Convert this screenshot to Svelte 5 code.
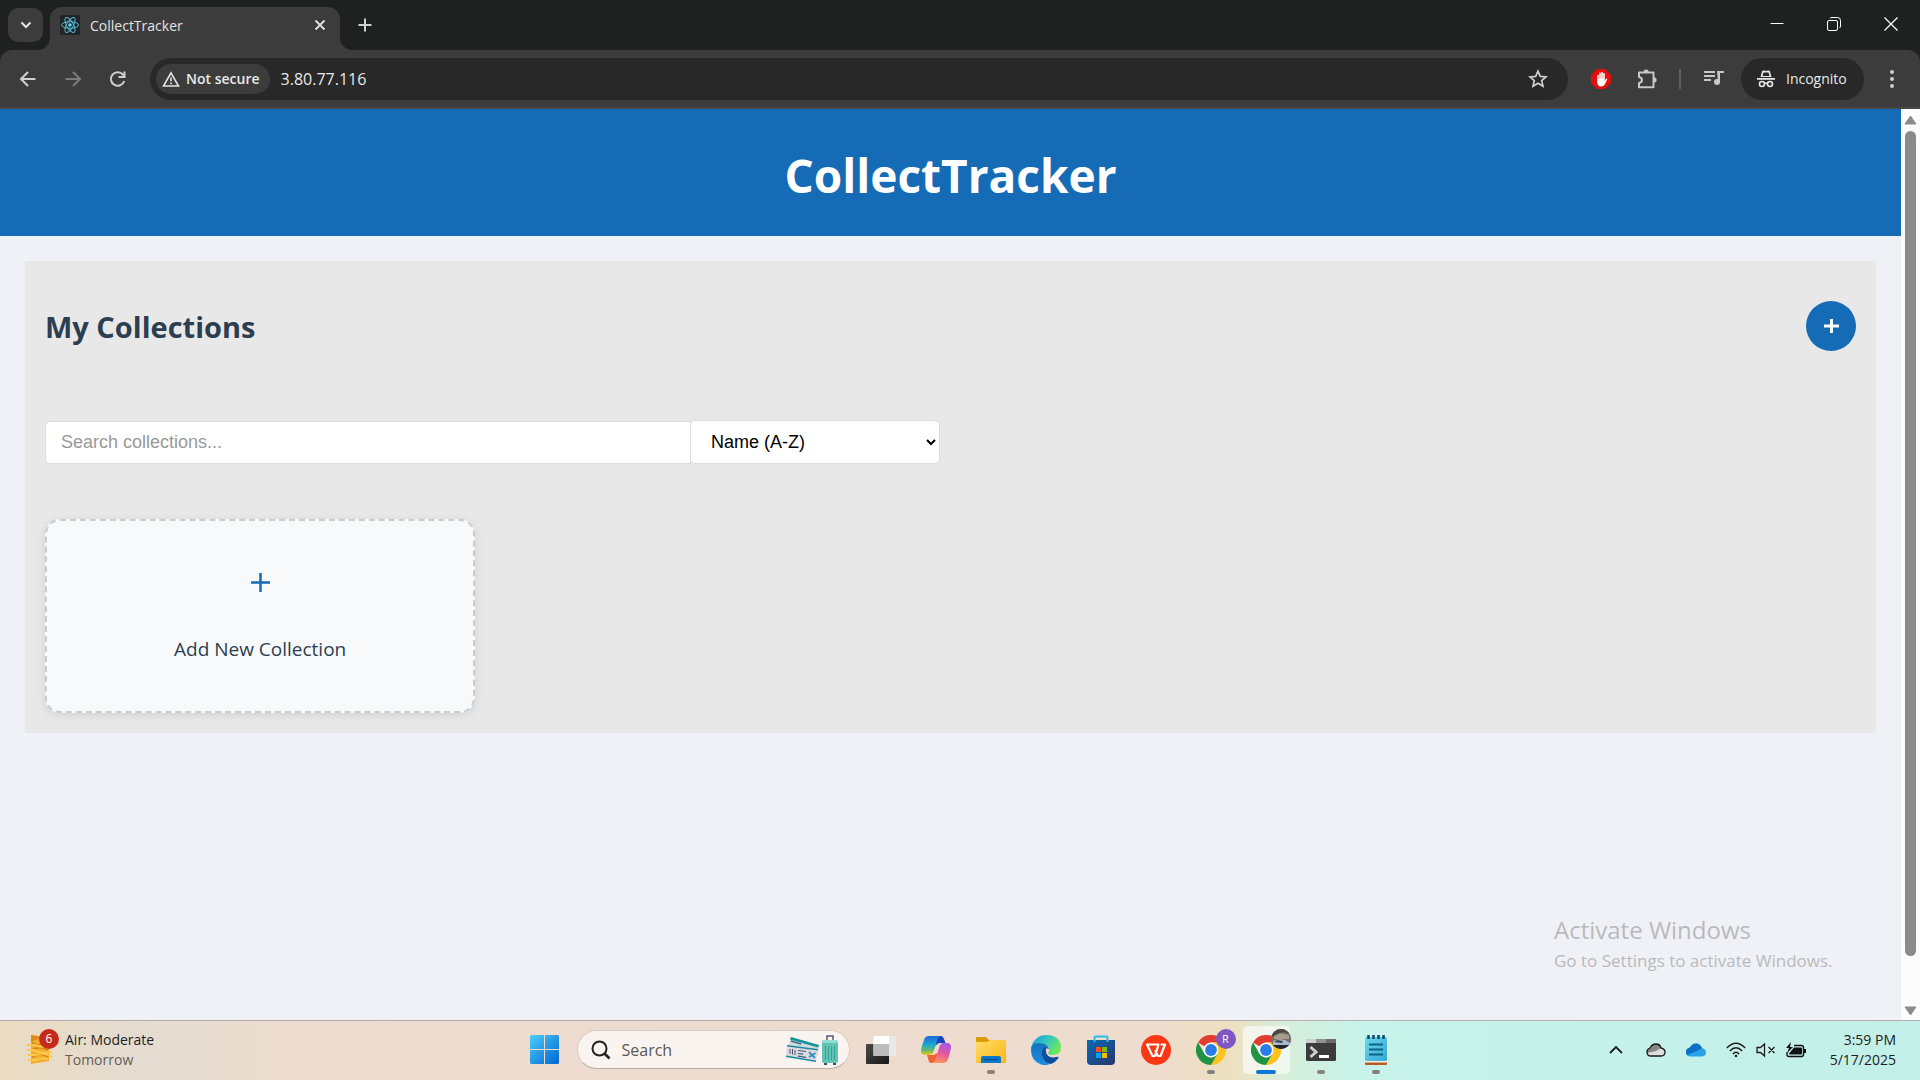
<script>
  let query = $state('');
  let order = $state('name-asc');
  let address = $state('3.80.77.116');
</script>

{#snippet chrome()}
  <svg class="chrome" viewBox="0 0 30 30" aria-hidden="true">
    <path d="M15 15 2 7.500A15 15 0 0 1 28 7.500H15z" fill="#e33b2e" />
    <path d="M28 7.500A15 15 0 0 1 15 30L21.500 18.700 15 7.500z" fill="#fcc31e" />
    <path d="M2 7.500 8.500 18.700 15 22.500 21.500 18.700 15 30A15 15 0 0 1 2 7.500z" fill="#229342" />
    <circle cx="15" cy="15" r="7.500" fill="#fff" />
    <circle cx="15" cy="15" r="5.900" fill="#2a7de9" />
  </svg>
{/snippet}

<div class="screen">
  <div class="tabstrip">
    <button class="tabsearch" aria-label="Search tabs">
      <svg width="12" height="8" viewBox="0 0 12 8"><path d="M1.500 1.500 6 6l4.500-4.500" fill="none" stroke="#e3e3e3" stroke-width="2" /></svg>
    </button>
    <div class="tab">
      <svg class="favicon" width="20" height="20" viewBox="0 0 20 20">
        <rect width="20" height="20" rx="2" fill="#222427" />
        <g fill="none" stroke="#53b9d2" stroke-width="1">
          <ellipse cx="10" cy="10" rx="8.500" ry="3.300" />
          <ellipse cx="10" cy="10" rx="8.500" ry="3.300" transform="rotate(60 10 10)" />
          <ellipse cx="10" cy="10" rx="8.500" ry="3.300" transform="rotate(120 10 10)" />
        </g>
        <circle cx="10" cy="10" r="1.700" fill="#61dafb" />
      </svg>
      <span class="tabtitle">CollectTracker</span>
      <button class="plain" aria-label="Close tab">
        <svg width="20" height="20" viewBox="0 0 20 20"><path d="m5.500 5.500 9 9m0-9-9 9" stroke="#e3e3e3" stroke-width="1.800" /></svg>
      </button>
    </div>
    <button class="plain newtab" aria-label="New tab">
      <svg width="20" height="20" viewBox="0 0 20 20"><path d="M10 3.500v13M3.500 10h13" stroke="#d0d0d0" stroke-width="2" /></svg>
    </button>
    <div class="wincontrols">
      <button class="plain" aria-label="Minimize"><svg width="16" height="16" viewBox="0 0 16 16"><path d="M1.500 7.500h13" stroke="#fff" /></svg></button>
      <button class="plain" aria-label="Restore"><svg width="16" height="16" viewBox="0 0 16 16" fill="none" stroke="#fff"><rect x="1.500" y="4.500" width="10" height="10" rx="1.500" /><path d="M4 2.500c.5-.7 1-1 2-1h5.500a3 3 0 0 1 3 3V10c0 1-.3 1.500-1 2" /></svg></button>
      <button class="plain" aria-label="Close"><svg width="16" height="16" viewBox="0 0 16 16"><path d="m1.500 1.500 13 13m0-13-13 13" stroke="#fff" stroke-width="1.200" /></svg></button>
    </div>
  </div>

  <div class="toolbar">
    <div class="nav">
      <button class="plain" aria-label="Back"><svg width="20" height="20" viewBox="0 0 20 20" fill="none" stroke="#cfcfcf" stroke-width="2"><path d="M17.500 10H4M10 3l-7 7 7 7" /></svg></button>
      <button class="plain" aria-label="Forward"><svg width="20" height="20" viewBox="0 0 20 20" fill="none" stroke="#7c7c7c" stroke-width="2"><path d="M2.500 10H16M10 3l7 7-7 7" /></svg></button>
      <button class="plain" aria-label="Reload"><svg width="20" height="20" viewBox="0 0 20 20" fill="none" stroke="#cfcfcf" stroke-width="2"><path d="M16.200 12A6.800 6.800 0 1 1 15 5.700l1.300 1.500M16.500 2.500v5.500h-6" /></svg></button>
    </div>
    <div class="omnibox">
      <button class="chip">
        <svg width="18" height="16" viewBox="0 0 18 16"><path d="M9 1.800 16.500 15H1.500z" fill="none" stroke="#e3e3e3" stroke-width="1.600" /><path d="M9 6.500v3.800m0 1.200v1.700" stroke="#e3e3e3" stroke-width="1.600" /></svg>
        Not secure
      </button>
      <input class="address" aria-label="Address" bind:value={address} />
      <button class="plain" aria-label="Bookmark this tab"><svg width="20" height="20" viewBox="0 0 20 20"><path d="m10 2.200 2.300 5.200 5.700.5-4.300 3.700 1.300 5.600-5-3-5 3 1.300-5.600L2 7.900l5.700-.5z" fill="none" stroke="#cfcfcf" stroke-width="1.700" /></svg></button>
    </div>
    <div class="tools">
      <button class="plain" aria-label="Ad blocker">
        <svg width="20" height="20" viewBox="0 0 20 20"><path d="M6 0h8l6 6v8l-6 6H6l-6-6V6z" fill="#e60d0d" /><path d="M6.200 11.500V6.200q.8-1 1.500 0V10h.5V4q.8-1 1.600 0v5.500h.4V3.300q.8-1 1.600 0v6.300h.4V4.500q.8-1 1.600 0V12l1-2q1-1 1.700-.2L14 15q-1 2.500-4 2.500-4 0-4-6z" fill="#fff" /></svg>
      </button>
      <button class="plain" aria-label="Extensions">
        <svg width="22" height="22" viewBox="0 0 22 22"><path d="M3 4.500h14.500v14.800H3v-4.200q3-.5 3-3t-3-3z" fill="none" stroke="#c7c7c7" stroke-width="2" stroke-linejoin="round" /><path d="M7.500 4a2.600 2.600 0 0 1 5.200 0zM18 9.300a2.600 2.600 0 0 1 0 5.200z" fill="#c7c7c7" /></svg>
      </button>
      <span class="divider"></span>
      <button class="plain" aria-label="Media controls">
        <svg width="20" height="20" viewBox="0 0 20 20" fill="#c7c7c7"><path d="M0 2h11v2H0zM0 6h11v2H0zM0 10h7v2H0zM13 2h7v2h-4v9.500h-2z" /><circle cx="13" cy="13" r="3" /></svg>
      </button>
      <button class="incognito">
        <svg width="18" height="18" viewBox="0 0 18 18"><path d="M0 8h18v1.700H0zM3.500 7 5 1.500Q5.500.2 7 .6q2 .8 4 0 1.500-.4 2 .9L14.500 7z" fill="#e8e8e8" /><path d="M6.500 2.500h5l1 3.500h-7z" fill="#282828" /><g fill="none" stroke="#e8e8e8" stroke-width="1.600"><circle cx="5" cy="14" r="2.500" /><circle cx="13" cy="14" r="2.500" /><path d="M7.500 13.500q1.500-1 3 0" /></g></svg>
        Incognito
      </button>
      <button class="plain menu" aria-label="Menu"><svg width="20" height="20" viewBox="0 0 20 20" fill="#cfcfcf"><circle cx="10" cy="3" r="2" /><circle cx="10" cy="10" r="2" /><circle cx="10" cy="17" r="2" /></svg></button>
    </div>
  </div>

  <div class="viewport">
    <div class="page">
      <header><h1>CollectTracker</h1></header>
      <main>
        <div class="heading">
          <h2>My Collections</h2>
          <button class="add" aria-label="Add collection"><svg width="15" height="15" viewBox="0 0 15 15"><path d="M7.500 0v14M0 7h15" stroke="#fff" stroke-width="3" /></svg></button>
        </div>
        <div class="filters">
          <input type="text" placeholder="Search collections..." aria-label="Search collections" bind:value={query} />
          <select aria-label="Sort collections" bind:value={order}>
            <option value="name-asc">Name (A-Z)</option>
            <option value="name-desc">Name (Z-A)</option>
          </select>
        </div>
        <div class="cards">
          <button class="card">
            <svg width="20" height="20" viewBox="0 0 20 20"><path d="M10.500 0v19M1 9.500h19" stroke="#156bb5" stroke-width="2.500" /></svg>
            <span>Add New Collection</span>
          </button>
        </div>
      </main>
    </div>
    <div class="scrollbar" aria-hidden="true">
      <svg width="13" height="10" viewBox="0 0 13 10"><path d="M6.500 1 12 9H1z" fill="#8b8b8b" stroke="#8b8b8b" stroke-linejoin="round" /></svg>
      <span class="thumb"></span>
      <span class="rest"></span>
      <svg width="13" height="10" viewBox="0 0 13 10"><path d="M6.500 9 12 1H1z" fill="#8b8b8b" stroke="#8b8b8b" stroke-linejoin="round" /></svg>
    </div>
    <div class="watermark">
      <p class="big">Activate Windows</p>
      <p>Go to Settings to activate Windows.</p>
    </div>
  </div>

  <div class="taskbar">
    <button class="weather">
      <span class="air">
        <svg width="26" height="30" viewBox="0 0 26 30"><path d="M4 0 22 3v23L4 29z" fill="#f3ad2b" /><path d="m4 0 12 2-12 5z" fill="#e08a1b" /><g fill="none" stroke="#d8861a" stroke-width="2"><path d="M5 8q8 4 16 1M5 15q8-5 16 0M5 22q8-6 16 0" /></g><g fill="none" stroke="#fbc84a" stroke-width="2"><path d="M0 10h8q6 3 17 1M0 15h6q8 4 19 2M1 20h8q6-4 16 2M1 25h8q6-3 12-1" /></g></svg>
        <span class="badge">6</span>
      </span>
      <span class="stack"><span>Air: Moderate</span><span class="dim">Tomorrow</span></span>
    </button>

    <div class="apps">
      <button class="app" aria-label="Start">
        <svg width="30" height="30" viewBox="0 0 30 30">
          <defs><linearGradient id="win" gradientUnits="userSpaceOnUse" x1="0" y1="0" x2="29" y2="29"><stop offset="0" stop-color="#4fd0fc" /><stop offset="1" stop-color="#0067d0" /></linearGradient></defs>
          <path d="M2 0h13v14H1V1zM16 0h13l1 1v13H16zM1 15h14v14H2l-1-1zM16 15h14v13l-1 1H16z" fill="url(#win)" />
        </svg>
      </button>
      <label class="search">
        <svg width="20" height="20" viewBox="0 0 20 20" fill="none" stroke="#222" stroke-width="2"><circle cx="8.500" cy="8.500" r="7" /><path d="m13.500 13.500 5 5" stroke-width="2.600" /></svg>
        <input type="text" placeholder="Search" aria-label="Search Windows" />
        <svg width="54" height="30" viewBox="0 0 54 30" aria-hidden="true">
          <path d="m6 2 28 8-1 10L3 12z" fill="#cfdbe0" /><path d="m6 2 28 8-1 2.500L5 4.500z" fill="#15949b" /><path d="m6 6 10 3" stroke="#456a88" stroke-width="1.500" />
          <path d="m2 10 31 4-2 13L1 22z" fill="#ded9dd" /><path d="m2 10 31 4v1.500L2 11.500zM1 20.500l30 5V27L1 22z" fill="#168b9f" />
          <path d="m13 15.500 8 1m-8 2 5 .7m-5 2 8 1.200" stroke="#34618d" stroke-width="1.200" fill="none" />
          <path d="m24 17 6 6m0.500-5-6.500 4" stroke="#2b8fc0" stroke-width="1.800" />
          <path d="M5 14v5m2.500-5v5.500M10 15v5" stroke="#534f70" />
          <path d="M42 6V1h6v5" fill="none" stroke="#55577a" stroke-width="1.500" />
          <rect x="37" y="5" width="16" height="23" rx="2.500" fill="#5fc4b3" /><rect x="37" y="5" width="16" height="3" rx="1.500" fill="#90dfd0" />
          <path d="M40.500 11v14m3-14v14m3-14v14m3-14v14" stroke="#3d9f92" stroke-width="1" /><path d="M39 28h3v2h-3zM48 28h3v2h-3z" fill="#4c4968" />
        </svg>
      </label>
      <button class="app" aria-label="Task view">
        <svg width="30" height="30" viewBox="0 0 30 30"><defs><linearGradient id="tv" x1="0" y1="0" x2="1" y2="1"><stop offset="0" stop-color="#4a4a46" /><stop offset="1" stop-color="#171717" /></linearGradient></defs><rect y="9" width="23" height="20" rx="1" fill="url(#tv)" /><rect x="7.500" y="1" width="22" height="20" rx="1" fill="#fff" /><path d="M7.500 9H23v12H7.500z" fill="#bcbcbb" /><path d="M23 1h6.500v20H23z" fill="#e9e9e9" /></svg>
      </button>
      <button class="app" aria-label="Copilot">
        <svg width="30" height="30" viewBox="0 0 30 30">
          <defs>
            <linearGradient id="cpa" x1="0" y1="0" x2="0" y2="1"><stop offset="0" stop-color="#2169dc" /><stop offset=".45" stop-color="#1ba7cf" /><stop offset=".75" stop-color="#65b96a" /><stop offset="1" stop-color="#f3c81f" /></linearGradient>
            <linearGradient id="cpb" x1=".6" y1="0" x2=".3" y2="1"><stop offset="0" stop-color="#a456e8" /><stop offset=".5" stop-color="#e6579b" /><stop offset="1" stop-color="#ff9b59" /></linearGradient>
          </defs>
          <path d="M14 1h6q2 0 3 3l1.500 4h-5q-4 0-5 4z" fill="#1843bf" />
          <path d="M16 28h-6q-2 0-2.500-3L6 20h5q4 0 5-4z" fill="#f0643c" />
          <path d="M8 1h12q-3 1-4 5l-3 10q-1 4-5 4H4q-4 0-4-4Q0 13 3 5q1-4 5-4z" fill="url(#cpa)" />
          <path d="M22 28H11q3-1 4-5l3-10q1-5 5-5h3q4 0 4 4 0 3-3 12-1 4-5 4z" fill="url(#cpb)" />
          <path d="m14.500 11 4-1.500-3 9-4 1.500z" fill="#eedccf" />
        </svg>
      </button>
      <button class="app running" aria-label="File Explorer">
        <svg width="30" height="30" viewBox="0 0 30 30"><defs><linearGradient id="fld" x1="0" y1="0" x2="1" y2="1"><stop offset="0" stop-color="#ffdc6b" /><stop offset="1" stop-color="#fbb80f" /></linearGradient></defs><path d="M0 3q0-1 1-1h9l3 3h16q1 0 1 1v6H0z" fill="#dd9b05" /><path d="M0 7h11l3-2h15q1 0 1 1v22H0z" fill="url(#fld)" /><path d="M5 28v-5q0-2 2-2h16q2 0 2 2v5z" fill="#0c78cc" /><path d="M8 24.500h14" stroke="#07549b" stroke-width="1.500" /></svg>
      </button>
      <button class="app" aria-label="Edge">
        <svg width="30" height="30" viewBox="0 0 30 30">
          <defs><linearGradient id="eda" x1="0" y1="0" x2="1" y2=".5"><stop offset="0" stop-color="#1597cb" /><stop offset=".5" stop-color="#30c4c5" /><stop offset="1" stop-color="#6be957" /></linearGradient><linearGradient id="edb" x1="0" y1="0" x2="0" y2="1"><stop offset="0" stop-color="#1273bd" /><stop offset="1" stop-color="#188de5" /></linearGradient></defs>
          <path d="M0 15A15 15 0 0 1 15 0Q29 0 30 12q0 8-8 8-5 0-5-2 2-2 1-5-2-5-9-4T0 15z" fill="url(#eda)" />
          <path d="M0 15q0-7 8-7 9 0 10 6-7-2-7 6 1 7 8 9-4 2-9 .5Q0 26 0 15z" fill="url(#edb)" />
          <path d="M15 11.500q-5 2-4 9 2 8 9 8.500 5-2 7.500-6 0-2-2-1-9 2-10.500-5-.3-3 0-5.500z" fill="#0b509e" />
        </svg>
      </button>
      <button class="app" aria-label="Microsoft Store">
        <svg width="30" height="30" viewBox="0 0 30 30"><defs><linearGradient id="sto" x1="0" y1="0" x2="1" y2="1"><stop offset="0" stop-color="#0c68b6" /><stop offset="1" stop-color="#28366b" /></linearGradient></defs><path d="M1 5h28v21q0 4-4 4H5q-4 0-4-4z" fill="url(#sto)" /><path d="M8.500 7V2.500q0-1 1-1h11q1 0 1 1V7" fill="none" stroke="#27bdec" stroke-width="2" /><path d="M10 12h5v5h-5z" fill="#f25022" /><path d="M16 12h5v5h-5z" fill="#7fba00" /><path d="M10 18h5v5h-5z" fill="#00a4ef" /><path d="M16 18h5v5h-5z" fill="#ffb900" /></svg>
      </button>
      <button class="app" aria-label="WPS Office">
        <svg width="30" height="30" viewBox="0 0 30 30"><circle cx="15" cy="15" r="15" fill="#fb3714" /><path d="M6 9.500h11.500L14 21h-2.500zM14.500 16l2.500 5h2.500L24 9.500h-3.500" fill="none" stroke="#fff" stroke-width="2.200" stroke-linejoin="round" stroke-linecap="round" /></svg>
      </button>
      <button class="app running" aria-label="Chrome, profile R">{@render chrome()}<span class="profile">R</span></button>
      <button class="app running active" aria-label="Chrome, incognito">
        {@render chrome()}
        <svg class="profile photo" viewBox="0 0 20 20"><path d="M0 0h20v20H0z" fill="#746e62" /><path d="M0 0h20v5L12 3 4 8 0 7z" fill="#4b4a42" /><path d="m3 7 6-3 9 2v4H3z" fill="#a69c89" /><path d="M2 12q5-3 12-1l5 3v3H2z" fill="#a9b8ca" /><path d="M2 16h17v4H2z" fill="#22282e" /><path d="m6 11 6 1-1 2-8-1z" fill="#3b4753" /></svg>
      </button>
      <button class="app running" aria-label="Terminal">
        <svg width="30" height="30" viewBox="0 0 30 30"><rect y="4" width="30" height="22" rx="1.500" fill="#3b3b3b" /><path d="M0 8V5q0-1 1-1h9v4z" fill="#cfcfcf" /><path d="M10 4h10v4H10z" fill="#929292" /><path d="M20 4h9q1 0 1 1v3H20z" fill="#6a6a6a" /><path d="m4.500 12 5.500 5-5.500 5" fill="none" stroke="#cfcfcf" stroke-width="3" /><path d="M13 21.500h10" stroke="#fff" stroke-width="3" /></svg>
      </button>
      <button class="app running" aria-label="Notepad">
        <svg width="30" height="30" viewBox="0 0 30 30"><defs><linearGradient id="pad" x1="0" y1="0" x2="1" y2="1"><stop offset="0" stop-color="#6bd6f0" /><stop offset="1" stop-color="#36a9d3" /></linearGradient></defs><path d="M4 26h22v3q0 1-1 1H5q-1 0-1-1z" fill="#b75b23" /><path d="M4 25h22v2.500H4z" fill="#f5f0e8" /><rect x="4" y="2" width="22" height="24" rx="1.500" fill="url(#pad)" /><path d="M8 9.500h14M8 14.500h14M8 19.500h14" stroke="#0b6484" stroke-width="2" /><path d="M7.500 0v4m5-4v4m5-4v4m5-4v4" stroke="#134c66" stroke-width="2.600" /></svg>
      </button>
    </div>

    <div class="tray">
      <button class="plain" aria-label="Hidden icons"><svg width="16" height="10" viewBox="0 0 16 10"><path d="m2 8 6-6 6 6" fill="none" stroke="#1d1d1d" stroke-width="1.800" /></svg></button>
      <button class="plain" aria-label="OneDrive"><svg width="20" height="14" viewBox="0 0 20 14"><path d="M4 5q2-4 6-4t5 4q4 1 4 4 0 4-4 4H5q-4 0-4-4 0-3 3-4z" fill="#dedede" /><path d="M4 5q2-4 6-4t5 4l-5 3-9 2q0-4 3-5z" fill="#868686" /><path d="M4 5q2-4 6-4t5 4q4 1 4 4 0 4-4 4H5q-4 0-4-4 0-3 3-4z" fill="none" stroke="#171717" stroke-width="1.300" /></svg></button>
      <button class="plain" aria-label="OneDrive work"><svg width="20" height="14" viewBox="0 0 20 14"><path d="M4 4.500Q6 .5 10 .5t6 4.500q4 1 4 4.500T16 13.500H4Q0 13 0 9t4-4.500z" fill="#28a3ea" /><path d="M4 4.500Q6 .5 10 .5T16 5l-5 3-10 4q-3-5.500 3-7.500z" fill="#0c6fc8" /></svg></button>
      <button class="plain status" aria-label="Network, sound and battery">
        <svg width="20" height="16" viewBox="0 0 20 16" fill="none" stroke="#1d1d1d" stroke-width="1.400"><path d="M.8 6q9.200-9.500 18.400 0M3.800 9q6.200-6.500 12.400 0M6.800 12q3.200-3.500 6.400 0" /><circle cx="10" cy="14" r="1.300" fill="#1d1d1d" stroke="none" /></svg>
        <svg width="20" height="16" viewBox="0 0 20 16" fill="none" stroke="#1d1d1d" stroke-width="1.300"><path d="M1 5.500h3.500L8.500 2v12l-4-3.500H1zM12.500 5l6 6m0-6-6 6" /></svg>
        <svg width="20" height="16" viewBox="0 0 20 16"><path d="M8 3.500h7.500q2 0 2 2v7q0 2-2 2H3q-2 0-2-2V10" fill="none" stroke="#111" stroke-width="1.400" /><path d="M8 5.500h7q1 0 1 1v5q0 1-1 1H3.500l-.5-1z" fill="#111" /><path d="M18 7h2v4h-2zM5 0 0 6h3l-2 5 6-6H4z" fill="#111" /></svg>
      </button>
      <button class="clock"><span>3:59 PM</span><span>5/17/2025</span></button>
    </div>
  </div>
</div>

<style>
  :global(body) { margin: 0; background: #f0f1f6; }
  * { box-sizing: border-box; }
  .screen { display: flex; flex-direction: column; height: 100vh; font-family: "Open Sans", "Noto Sans", sans-serif; font-size: 14px; overflow: hidden; background: #1f2120; }
  button { font: inherit; color: inherit; border: 0; background: none; padding: 0; cursor: pointer; }
  input { font: inherit; border: 0; background: none; padding: 0; min-width: 0; outline: 0; }
  svg { display: block; flex: none; }
  p, h1, h2 { margin: 0; }
  .plain { display: grid; place-items: center; }

  .tabstrip { display: flex; height: 50px; flex: none; padding: 0 1px 0 8px; color: #e3e3e3; }
  .tabsearch { width: 35px; height: 34px; margin-top: 8px; border-radius: 10px; background: #3c3c3c; display: grid; place-items: center; }
  .tab { position: relative; display: flex; align-items: center; gap: 10px; width: 290px; margin: 7px 0 0 7px; padding: 0 10px 7px 10px; border-radius: 12px 12px 0 0; background: #3c3c3c; }
  .tab::before, .tab::after { content: ""; position: absolute; bottom: 0; width: 12px; height: 12px; }
  .tab::before { right: 100%; background: radial-gradient(circle at 0 0, transparent 12px, #3c3c3c 12px); }
  .tab::after { left: 100%; background: radial-gradient(circle at 100% 0, transparent 12px, #3c3c3c 12px); }
  .tabtitle { flex: 1; font-size: 14px; }
  .newtab { width: 50px; }
  .wincontrols { display: flex; margin-left: auto; }
  .wincontrols button { width: 57px; padding-bottom: 2px; }

  .toolbar { display: flex; align-items: center; height: 59px; flex: none; background: #3c3c3c; border-radius: 12px 12px 0 0; border-bottom: 2px solid #484848; padding: 0 18px; color: #e8e8e8; }
  .nav { display: flex; gap: 25px; margin-right: 22px; }
  .omnibox { display: flex; align-items: center; flex: 1; height: 42px; border-radius: 21px; background: #282828; padding: 0 20px 0 6px; }
  .chip { display: flex; align-items: center; gap: 6px; height: 30px; padding: 0 10px 0 6px; border-radius: 15px; background: #3c3c3c; font-size: 14px; font-weight: 600; white-space: nowrap; }
  .address { flex: 1; margin-left: 11px; color: #e8e8e8; font-size: 16px; }
  .tools { display: flex; align-items: center; margin-left: 23px; }
  .tools > .plain { margin-right: 25px; }
  .tools > .plain:nth-of-type(2) { margin-right: 21px; }
  .tools > .plain:nth-of-type(3) { margin-right: 17px; }
  .divider { width: 2px; height: 20px; margin-right: 23px; background: #5f5f5f; }
  .incognito { display: flex; align-items: center; gap: 11px; height: 42px; width: 123px; padding: 0 0 0 16px; border-radius: 21px; background: #282828; font-size: 14px; }
  .tools > .menu { margin: 0 0 0 18px; }

  .viewport { position: relative; display: flex; flex: 1; min-height: 0; background: #f0f1f6; }
  .page { flex: 1; min-width: 0; overflow: hidden; }
  header { display: grid; place-items: center; height: 127px; padding-top: 4px; background: #156bb5; }
  h1 { color: #fff; font-size: 46px; line-height: 68px; font-weight: 700; }
  main { margin: 25px; padding: 20px; background: #e8e8e8; }
  .heading { display: flex; align-items: center; justify-content: space-between; padding: 20px 0; margin-bottom: 49px; }
  h2 { padding-top: 2px; font-size: 29px; line-height: 40px; font-weight: 700; color: #2c3e50; }
  .add { width: 50px; height: 50px; border-radius: 50%; background: #156bb5; display: grid; place-items: center; }
  .filters { display: flex; align-items: end; max-width: 895px; font: 18px "Liberation Sans", Arial, sans-serif; }
  .filters input { flex: 1; height: 43px; padding: 0 15px; border: 1px solid #ddd; border-radius: 5px 0 0 5px; background: #fff; }
  .filters input::placeholder { color: #999; }
  .filters select { width: 250px; height: 44px; margin-left: -1px; padding: 0 2px 0 16px; border: 1px solid #ddd; border-radius: 5px; background: #fff; color: #000; font: inherit; }
  .cards { display: grid; grid-template-columns: repeat(4, 1fr); gap: 30px; margin-top: 55px; }
  .card { display: flex; flex-direction: column; align-items: center; justify-content: center; gap: 42px; height: 194px; padding-top: 3px; border: 2px dashed #ccc; border-radius: 15px; background: #f8f9fb; color: #2c3e50; font-size: 19px; line-height: 28px; box-shadow: 0 2px 8px rgba(0, 0, 0, 0.1); }
  .scrollbar { display: flex; flex-direction: column; align-items: center; width: 19px; padding: 6px 0 4px; background: #fcfcfc; }
  .thumb { flex: 825; width: 11px; margin-top: 6px; border-radius: 6px; background: #8b8b8b; }
  .rest { flex: 50; }
  .watermark { position: absolute; right: 82px; bottom: 45px; width: 284px; color: #b9babd; font-size: 17px; line-height: 28px; white-space: nowrap; pointer-events: none; }
  .watermark .big { font-size: 24px; line-height: 34px; }

  .taskbar { display: grid; grid-template-columns: 1fr auto 1fr; align-items: center; height: 60px; flex: none; padding-bottom: 2px; border-top: 1px solid #b5aeaa; color: #1d1d1d; background: linear-gradient(90deg, #eadbc1 0, #e5dcd1 7%, #ebdccf 15%, #eedbcf 25%, #eedccf 60%, #ede0c0 64%, #d6eedb 67%, #c7f3ea 71%, #c2f0e8 100%); }
  .weather { display: flex; align-items: center; gap: 12px; justify-self: start; padding-left: 27px; text-align: left; }
  .air { position: relative; }
  .badge { position: absolute; left: 12px; top: -6px; width: 20px; height: 20px; border-radius: 50%; background: #c42b1c; color: #fff; font-size: 12px; line-height: 20px; text-align: center; }
  .stack, .clock { display: flex; flex-direction: column; font-size: 14px; line-height: 20px; white-space: nowrap; }
  .dim { color: #626058; }
  .apps { display: flex; align-items: center; }
  .app { position: relative; display: grid; place-items: center; width: 55px; height: 48px; }
  .search { display: flex; align-items: center; width: 273px; height: 39px; margin: 0 4px 0 5px; padding: 0 10px 0 13px; border-radius: 20px; border: 1px solid #dccdc4; border-bottom-color: #b9aca5; background: #faf4f0; }
  .search input { flex: 1; margin-left: 11px; font-size: 16px; }
  .search input::placeholder { color: #5b5754; }
  .running::after { content: ""; position: absolute; left: 50%; bottom: 0; width: 8px; height: 4px; margin-left: -4px; border-radius: 2px; background: #85817c; }
  .active { background: rgba(255, 255, 255, 0.6); border-radius: 5px; margin: 0 4px; width: 47px; }
  .active::after { width: 20px; margin-left: -10px; background: #0b78d4; }
  .chrome { width: 30px; height: 30px; }
  .profile { position: absolute; right: 3px; top: 3px; width: 20px; height: 20px; border-radius: 50%; background: #7e57c2; color: #fff; font-size: 11px; line-height: 20px; text-align: center; }
  .active .profile { right: -1px; }
  .tray { display: flex; align-items: center; justify-self: end; gap: 20px; padding-right: 24px; }
  .tray .plain:first-child { margin-right: 2px; }
  .status { display: flex; gap: 10px; }
  .clock { width: 70px; text-align: right; }
</style>
